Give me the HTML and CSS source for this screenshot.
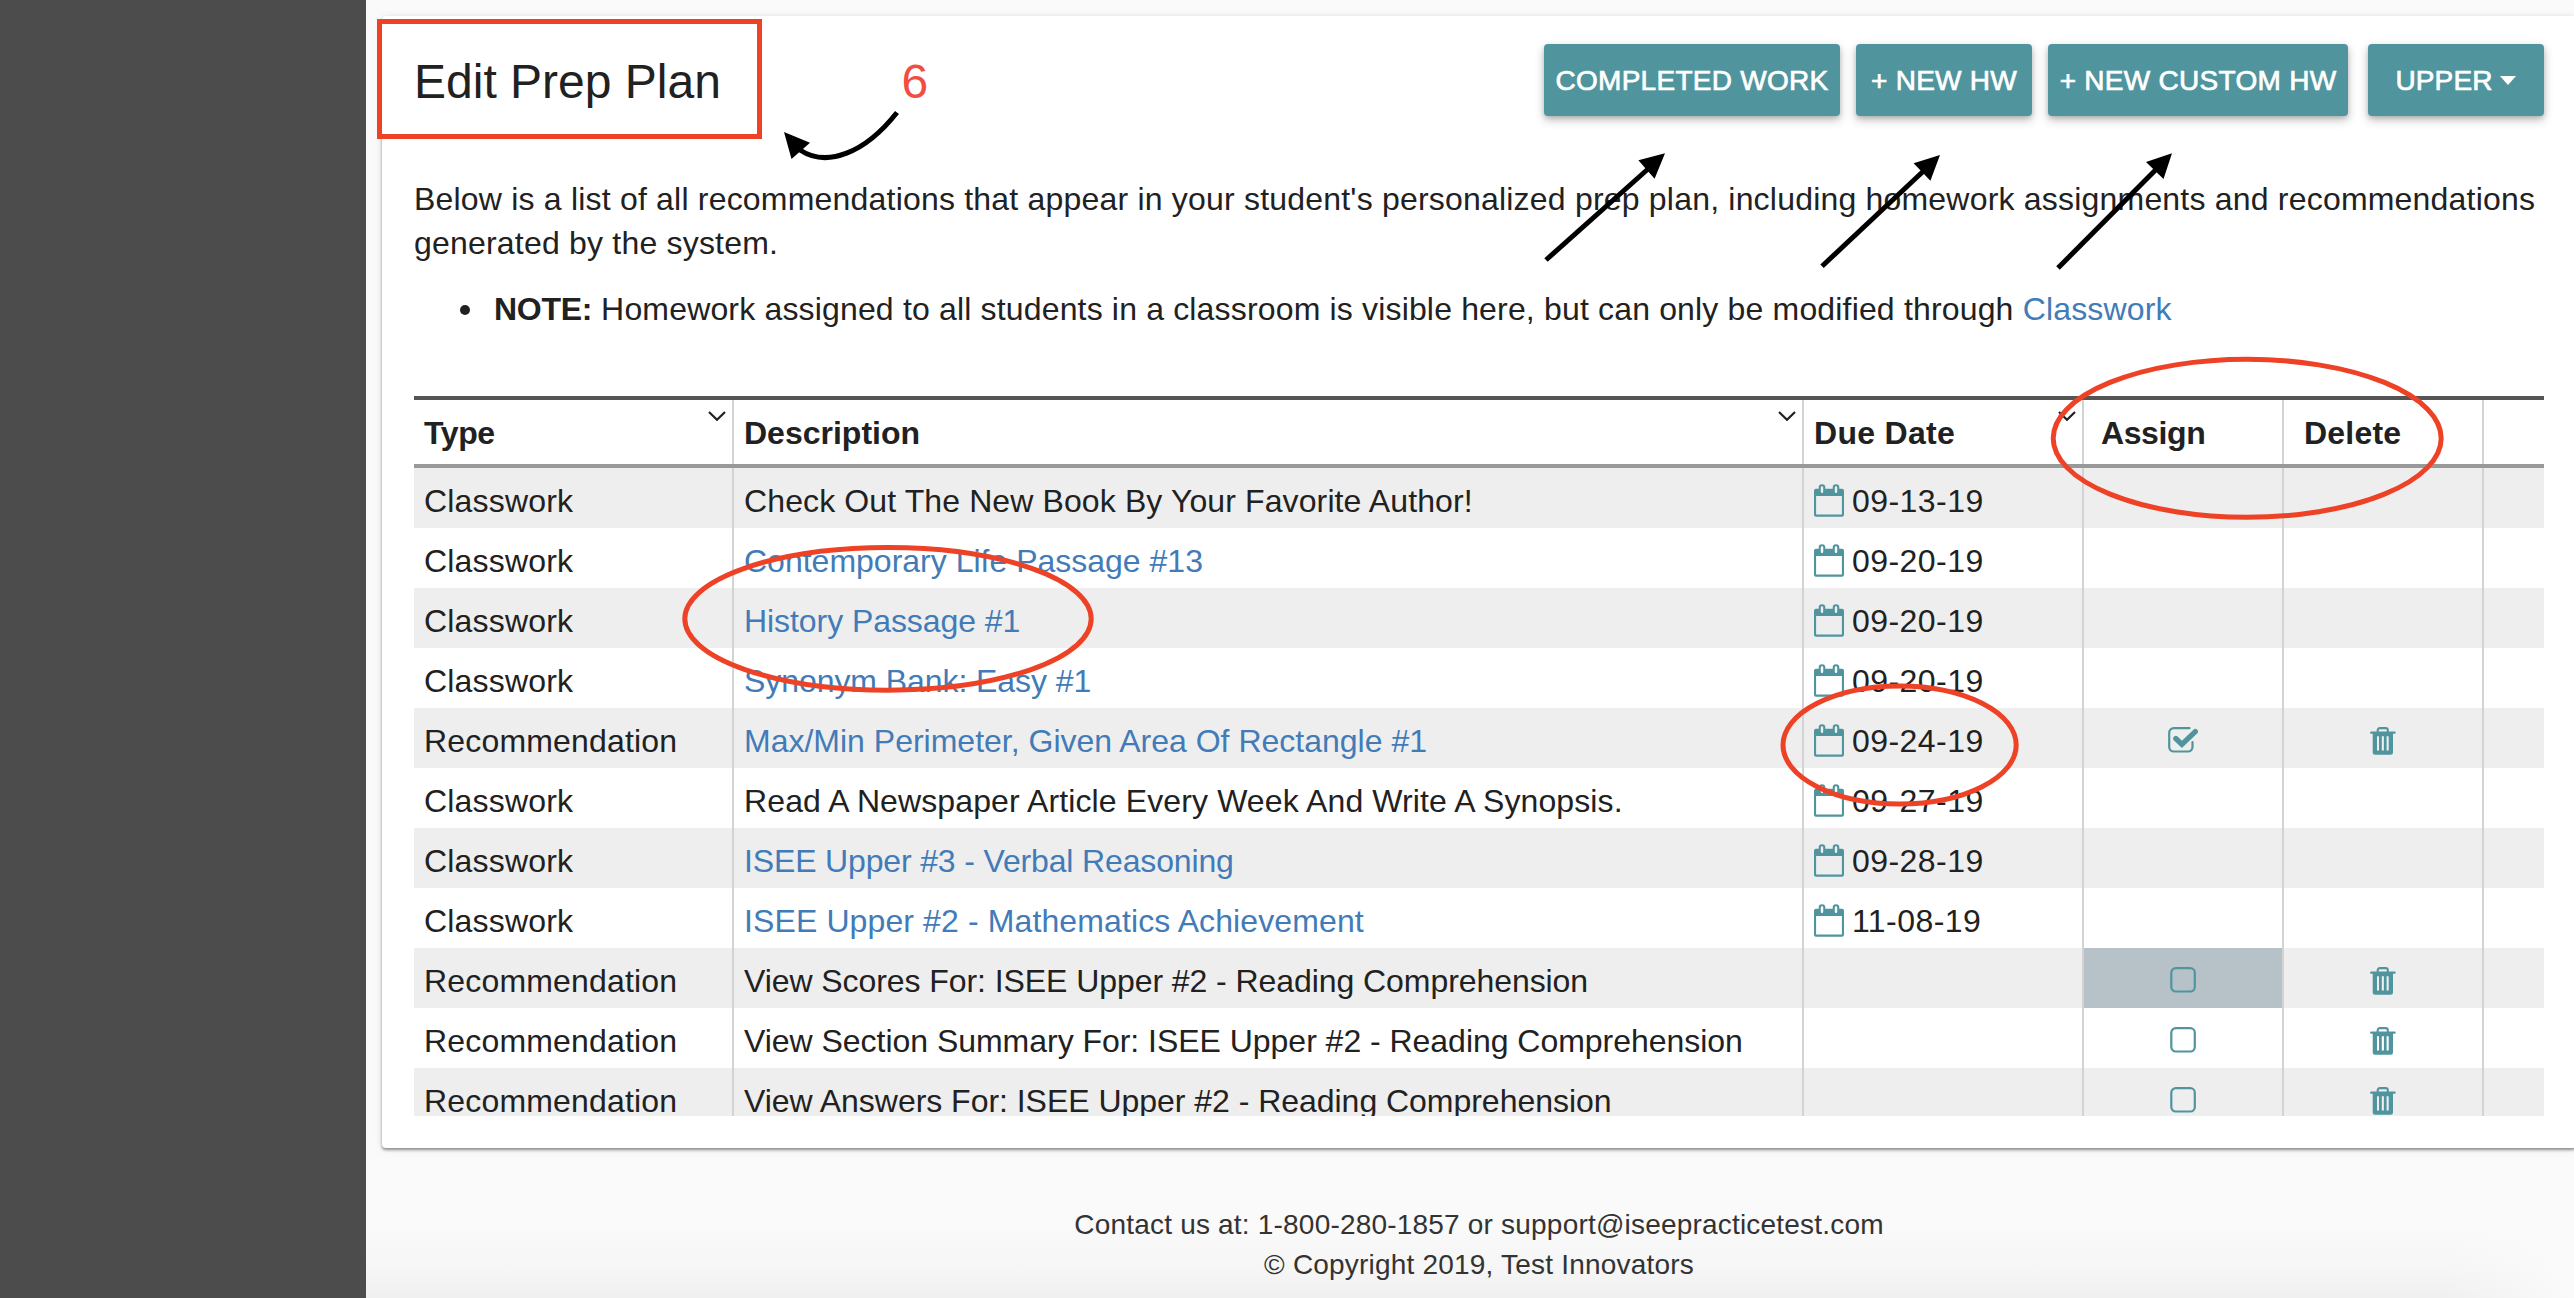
FILE: index.html
```html
<!DOCTYPE html>
<html lang="en">
<head>
<meta charset="utf-8">
<title>Edit Prep Plan</title>
<link rel="stylesheet" href="styles.css">
</head>
<body>
<svg class="defs" aria-hidden="true">
  <symbol id="calendar" viewBox="0 0 30 33">
    <path fill="currentColor" fill-rule="evenodd" d="M2 4.700H4.700V3.500a3.300 3.300 0 0 1 6.600 0V4.700H18.700V3.500a3.300 3.300 0 0 1 6.600 0V4.700H28a2 2 0 0 1 2 2V30.700a2 2 0 0 1-2 2H2a2 2 0 0 1-2-2V6.700a2 2 0 0 1 2-2ZM2.100 12V30.500H27.900V12ZM6.800 3.500V7.800a1.200 1.200 0 0 0 2.400 0V3.500a1.200 1.200 0 0 0-2.400 0ZM20.800 3.500V7.800a1.200 1.200 0 0 0 2.400 0V3.500a1.200 1.200 0 0 0-2.400 0Z"/>
  </symbol>
  <symbol id="box" viewBox="0 0 30 28">
    <rect x="3.300" y="1.200" width="23.500" height="23.300" rx="4.500" fill="none" stroke="currentColor" stroke-width="2.200"/>
  </symbol>
  <symbol id="checked" viewBox="0 0 30 28">
    <path d="M21.500 1.200H5.700A4.500 4.500 0 0 0 1.200 5.700V20a4.500 4.500 0 0 0 4.500 4.500H20a4.500 4.500 0 0 0 4.500-4.500V15" fill="none" stroke="currentColor" stroke-width="2.200" stroke-linecap="round"/>
    <path d="M7.800 11.500 13.900 17.400 27.300 4.600" fill="none" stroke="currentColor" stroke-width="5.300" stroke-linecap="round"/>
  </symbol>
  <symbol id="trash" viewBox="0 0 26 28">
    <path d="M7.700 5V3.300A2.200 2.200 0 0 1 9.900 1.100H15.600A2.200 2.200 0 0 1 17.800 3.300V5" fill="none" stroke="currentColor" stroke-width="2.100"/>
    <path fill="currentColor" fill-rule="evenodd" d="M1.200 4.500H24.600a1.150 1.150 0 0 1 0 2.300H23V25.300a2.500 2.500 0 0 1-2.500 2.500H5.200a2.500 2.500 0 0 1-2.500-2.500V6.800H1.200a1.150 1.150 0 0 1 0-2.300ZM7 9.200V23.500H9V9.200ZM11.800 9.200V23.500H13.900V9.200ZM16.600 9.200V23.500H18.700V9.200Z"/>
  </symbol>
  <symbol id="chevron" viewBox="0 0 18 10">
    <path d="M1 1 9 8.800 17 1" fill="none" stroke="currentColor" stroke-width="2.200"/>
  </symbol>
</svg>

<div class="page">
  <aside class="sidebar"></aside>
  <main class="main">
    <section class="card">
      <header class="head">
        <h1 class="title">Edit Prep Plan</h1>
        <div class="buttons">
          <button class="btn btn-completed">COMPLETED WORK</button>
          <button class="btn btn-new">+ NEW HW</button>
          <button class="btn btn-custom">+ NEW CUSTOM HW</button>
          <button class="btn btn-level">UPPER<span class="caret"></span></button>
        </div>
      </header>
      <p class="intro">Below is a list of all recommendations that appear in your student's personalized prep plan, including homework assignments and recommendations<br>generated by the system.</p>
      <ul class="notes">
        <li class="note"><b>NOTE:</b> Homework assigned to all students in a classroom is visible here, but can only be modified through <a>Classwork</a></li>
      </ul>
      <div class="grid">
        <div class="row row-head">
          <div class="cell head-type">Type<svg class="chev"><use href="#chevron"/></svg></div>
          <div class="cell">Description<svg class="chev"><use href="#chevron"/></svg></div>
          <div class="cell head-date">Due Date<svg class="chev"><use href="#chevron"/></svg></div>
          <div class="cell head-assign">Assign</div>
          <div class="cell head-delete">Delete</div>
          <div class="cell"></div>
        </div>
        <div class="row"><div class="cell type">Classwork</div><div class="cell wide">Check Out The New Book By Your Favorite Author!</div><div class="cell date"><svg class="cal"><use href="#calendar"/></svg>09-13-19</div><div class="cell"></div><div class="cell"></div><div class="cell"></div></div>
        <div class="row"><div class="cell type">Classwork</div><div class="cell"><a>Contemporary Life Passage #13</a></div><div class="cell date"><svg class="cal"><use href="#calendar"/></svg>09-20-19</div><div class="cell"></div><div class="cell"></div><div class="cell"></div></div>
        <div class="row"><div class="cell type">Classwork</div><div class="cell snug"><a>History Passage #1</a></div><div class="cell date"><svg class="cal"><use href="#calendar"/></svg>09-20-19</div><div class="cell"></div><div class="cell"></div><div class="cell"></div></div>
        <div class="row"><div class="cell type">Classwork</div><div class="cell snug"><a>Synonym Bank: Easy #1</a></div><div class="cell date"><svg class="cal"><use href="#calendar"/></svg>09-20-19</div><div class="cell"></div><div class="cell"></div><div class="cell"></div></div>
        <div class="row"><div class="cell type">Recommendation</div><div class="cell"><a>Max/Min Perimeter, Given Area Of Rectangle #1</a></div><div class="cell date"><svg class="cal"><use href="#calendar"/></svg>09-24-19</div><div class="cell action"><svg class="check"><use href="#checked"/></svg></div><div class="cell action"><svg class="trash"><use href="#trash"/></svg></div><div class="cell"></div></div>
        <div class="row"><div class="cell type">Classwork</div><div class="cell wide">Read A Newspaper Article Every Week And Write A Synopsis.</div><div class="cell date"><svg class="cal"><use href="#calendar"/></svg>09-27-19</div><div class="cell"></div><div class="cell"></div><div class="cell"></div></div>
        <div class="row"><div class="cell type">Classwork</div><div class="cell tight"><a>ISEE Upper #3 - Verbal Reasoning</a></div><div class="cell date"><svg class="cal"><use href="#calendar"/></svg>09-28-19</div><div class="cell"></div><div class="cell"></div><div class="cell"></div></div>
        <div class="row"><div class="cell type">Classwork</div><div class="cell wide"><a>ISEE Upper #2 - Mathematics Achievement</a></div><div class="cell date"><svg class="cal"><use href="#calendar"/></svg>11-08-19</div><div class="cell"></div><div class="cell"></div><div class="cell"></div></div>
        <div class="row"><div class="cell type">Recommendation</div><div class="cell snug">View Scores For: ISEE Upper #2 - Reading Comprehension</div><div class="cell"></div><div class="cell action active"><svg class="check"><use href="#box"/></svg></div><div class="cell action"><svg class="trash"><use href="#trash"/></svg></div><div class="cell"></div></div>
        <div class="row"><div class="cell type">Recommendation</div><div class="cell near">View Section Summary For: ISEE Upper #2 - Reading Comprehension</div><div class="cell"></div><div class="cell action"><svg class="check"><use href="#box"/></svg></div><div class="cell action"><svg class="trash"><use href="#trash"/></svg></div><div class="cell"></div></div>
        <div class="row"><div class="cell type">Recommendation</div><div class="cell near">View Answers For: ISEE Upper #2 - Reading Comprehension</div><div class="cell"></div><div class="cell action"><svg class="check"><use href="#box"/></svg></div><div class="cell action"><svg class="trash"><use href="#trash"/></svg></div><div class="cell"></div></div>
      </div>
    </section>
    <footer class="footer">
      <div>Contact us at: 1-800-280-1857 or support@iseepracticetest.com</div>
      <div>© Copyright 2019, Test Innovators</div>
    </footer>
  </main>
</div>

<svg class="marks" viewBox="0 0 2574 1298">
  <g fill="none" stroke="#ee4227" stroke-width="5">
    <rect x="379.500" y="21.500" width="380" height="115"/>
    <ellipse cx="888" cy="618.800" rx="203.200" ry="71.400"/>
    <ellipse cx="2247.200" cy="438.300" rx="194" ry="79"/>
    <ellipse cx="1899.600" cy="745" rx="116.600" ry="59"/>
  </g>
  <g fill="none" stroke="#000" stroke-width="5">
    <path d="M897 112.500C865 153 827 168 800 150"/>
    <path d="M1546 260 1648 169"/>
    <path d="M1822 266.300 1923 171.500"/>
    <path d="M2058 268 2156 169.500"/>
  </g>
  <path d="M784 132 810 142.700 791.500 159ZM1665 153.300 1638.400 160.300 1654.600 178.700ZM1940 155 1913.600 163.300 1930.400 180.700ZM2172 153.300 2146 162 2163.500 179Z"/>
  <text class="mark-number" x="901.500" y="98">6</text>
</svg>
</body>
</html>
```
FILE: styles.css
```css
* { box-sizing: border-box; }
body {
  margin: 0;
  height: 1298px;
  overflow: hidden;
  background: #fafafa;
  color: #212121;
  font: 32px/44px "Liberation Sans", Arial, sans-serif;
}
a { color: #427bb7; }
.defs { display: none; }
.page { display: flex; height: 1298px; }
.sidebar { flex: none; width: 366px; background: #4c4c4c; }
.main {
  flex: none;
  width: 2226px;
  padding: 16px;
  background:
    linear-gradient(to right, rgba(250, 250, 250, 0) 2080px, #fafafa 2208px),
    linear-gradient(#fafafa 0 1222px, #f6f6f6 1268px, #f0f0f0 1298px);
}
.card {
  height: 1132px;
  padding: 28px 32px 0;
  background: #fff;
  border-radius: 4px;
  box-shadow: 0 2px 3px rgba(0, 0, 0, .4), 0 1px 8px rgba(0, 0, 0, .1);
}
.head { display: flex; justify-content: space-between; height: 72px; }
.title { margin: 0; font-size: 48px; font-weight: 400; line-height: 75px; }
.buttons { display: flex; }
.btn {
  display: flex;
  align-items: center;
  justify-content: center;
  height: 72px;
  padding: 1px 0 0;
  border: 0;
  border-radius: 4px;
  background: #50959e;
  color: #fff;
  font: 28px/32px "Liberation Sans", Arial, sans-serif;
  letter-spacing: .28px;
  white-space: nowrap;
  -webkit-text-stroke: .7px #fff;
  box-shadow: 0 4px 10px rgba(0, 0, 0, .25), 0 2px 4px rgba(0, 0, 0, .12);
}
.btn-completed { width: 296px; }
.btn-new { width: 176px; margin-left: 16px; }
.btn-custom { width: 300px; margin-left: 16px; }
.btn-level { width: 176px; margin-left: 20px; letter-spacing: .1px; }
.caret {
  margin-left: 8px;
  border: 8px solid transparent;
  border-top: 9px solid #fff;
  border-bottom: 0;
}
.intro { margin: 61px 0 0; letter-spacing: .2px; white-space: nowrap; }
.notes { margin: 22px 0 0; padding: 0; list-style: none; white-space: nowrap; }
.note { display: flex; align-items: center; white-space: pre; letter-spacing: .165px; }
.note::before {
  content: "";
  width: 10px;
  height: 10px;
  margin: 2px 24px 0 46px;
  border-radius: 50%;
  background: #212121;
}
.note b { letter-spacing: -.3px; }
.grid { width: 2130px; height: 720px; margin-top: 65px; overflow: hidden; }
.row {
  display: grid;
  grid-template-columns: 320px 1070px 280px 200px 200px 60px;
  grid-template-rows: 100%;
  height: 60px;
  line-height: 66px;
  white-space: nowrap;
}
.row:nth-child(even) { background: #eee; }
.row-head {
  height: 72px;
  border-top: 4px solid #555;
  border-bottom: 4px solid #999;
  font-weight: 700;
}
.row-head .cell { display: flex; justify-content: space-between; }
.cell { padding: 0 6px 0 10px; border-right: 2px solid #d3d3d3; }
.cell:last-child { border-right: 0; }
.row-head .head-type { letter-spacing: -.4px; }
.row-head .head-date { letter-spacing: .3px; }
.row-head .head-assign { padding-left: 17px; letter-spacing: -.4px; }
.row-head .head-delete { padding-left: 20px; letter-spacing: .2px; }
.type { letter-spacing: .18px; }
.wide { letter-spacing: .115px; }
.near { letter-spacing: -.03px; }
.snug { letter-spacing: -.07px; }
.tight { letter-spacing: -.15px; }
.chev { width: 18px; height: 10px; margin-top: 11px; }
.date { display: flex; letter-spacing: .45px; }
.cal { width: 30px; height: 33px; margin: 16px 8px 0 0; color: #50959e; }
.action { display: flex; justify-content: center; padding: 19px 0 0; color: #50959e; }
.check { width: 30px; height: 28px; }
.trash { width: 26px; height: 28px; }
.active { background: #b6c2c7; }
.footer {
  padding-top: 57px;
  color: #333;
  font-size: 28px;
  line-height: 40px;
  letter-spacing: .2px;
  text-align: center;
}
.marks { position: absolute; left: 0; top: 0; width: 2574px; height: 1298px; }
.mark-number { fill: #f04e3e; font-size: 48px; }
```
